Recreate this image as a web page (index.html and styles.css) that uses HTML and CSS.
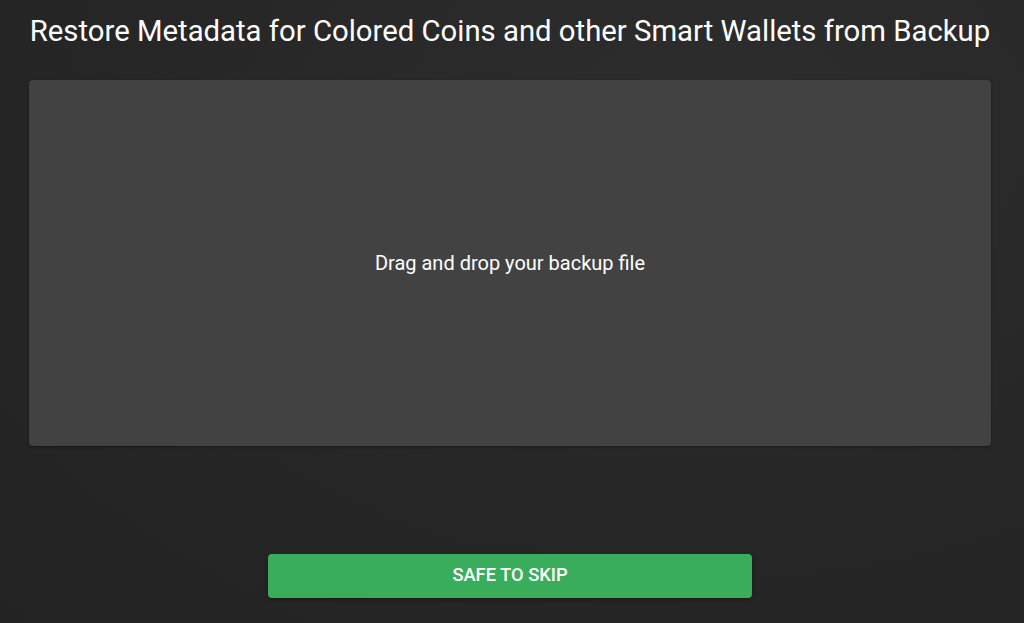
FILE: index.html
```html
<!DOCTYPE html>
<html lang="en">
<head>
    <meta charset="UTF-8">
    <meta name="viewport" content="width=device-width, initial-scale=1.0">
    <title>Restore Metadata</title>
    <link rel="stylesheet" href="styles.css">
</head>
<body>
    <div class="container">
        <!-- Heading -->
        <h1>Restore Metadata for Colored Coins and other Smart Wallets from Backup</h1>

        <!-- Drop zone -->
        <div class="drop-zone">
            <p>Drag and drop your backup file</p>
        </div>

        <!-- Skip -->
        <div class="actions">
            <button class="skip-btn">Safe to skip</button>
        </div>
    </div>
</body>
</html>
```

FILE: styles.css
```css
html, body {
    height: 100%;
}

body {
    font-family: Roboto, "Noto Sans", sans-serif;
    background: radial-gradient(ellipse at 70% 20%, #2d2d2d 0%, #262626 60%, #232323 100%);
    color: #fff;
    margin: 0;
    padding: 0 33px 0 29px;
    overflow: hidden;
}

.container {
    display: flex;
    flex-direction: column;
}

h1 {
    font-size: 29.3px;
    font-weight: 400;
    text-align: center;
    margin: 0;
    padding-top: 15px;
    line-height: 32px;
    height: 80px;
    box-sizing: border-box;
    white-space: nowrap;
}

/* Drop zone */
.drop-zone {
    height: 366px;
    background-color: #424242;
    border-radius: 4px;
    box-shadow: 0 1px 3px rgba(0, 0, 0, 0.35);
    display: flex;
    align-items: center;
    justify-content: center;
}

.drop-zone p {
    font-size: 20px;
    margin: 0;
}

/* Skip button */
.actions {
    display: flex;
    justify-content: center;
    padding-top: 108px;
}

.skip-btn {
    width: 484px;
    height: 44px;
    padding: 0 0 3px;
    background-color: #3aad5c;
    color: #fff;
    border: none;
    border-radius: 4px;
    font-family: Roboto, sans-serif;
    font-size: 18.3px;
    font-weight: 500;
    text-transform: uppercase;
    box-shadow: 0 2px 4px rgba(0, 0, 0, 0.3);
    cursor: pointer;
}
```
